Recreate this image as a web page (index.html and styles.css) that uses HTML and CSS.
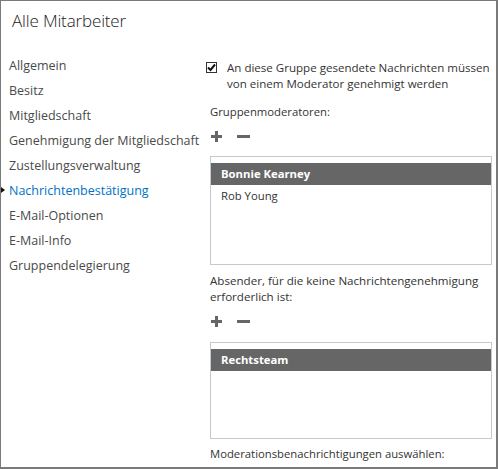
FILE: index.html
```html
<!DOCTYPE html>
<html lang="de">
<head>
<meta charset="utf-8">
<title>Alle Mitarbeiter</title>
<link rel="stylesheet" href="styles.css">
</head>
<body>
<div class="dialog">
  <h1 class="title">Alle Mitarbeiter</h1>
  <div class="main">
    <nav class="nav">
      <div class="nav-item">Allgemein</div>
      <div class="nav-item">Besitz</div>
      <div class="nav-item">Mitgliedschaft</div>
      <div class="nav-item">Genehmigung der Mitgliedschaft</div>
      <div class="nav-item">Zustellungsverwaltung</div>
      <div class="nav-item active">Nachrichtenbestätigung</div>
      <div class="nav-item">E-Mail-Optionen</div>
      <div class="nav-item">E-Mail-Info</div>
      <div class="nav-item">Gruppendelegierung</div>
    </nav>
    <section class="content">
      <label class="check-row">
        <span class="checkbox">
          <svg width="11" height="11" viewBox="0 0 11 11"><path d="M2 5.5 L4.5 8 L9 2.5" fill="none" stroke="#111" stroke-width="2"/></svg>
        </span>
        <span class="check-label">An diese Gruppe gesendete Nachrichten müssen von einem Moderator genehmigt werden</span>
      </label>
      <div class="field-label mod-label">Gruppenmoderatoren:</div>
      <div class="tools">
        <span class="tool plus"></span>
        <span class="tool minus"></span>
      </div>
      <div class="listbox">
        <div class="row selected">Bonnie Kearney</div>
        <div class="row">Rob Young</div>
      </div>
      <div class="field-label sender-label">Absender, für die keine Nachrichtengenehmigung erforderlich ist:</div>
      <div class="tools">
        <span class="tool plus"></span>
        <span class="tool minus"></span>
      </div>
      <div class="listbox small">
        <div class="row selected">Rechtsteam</div>
      </div>
      <div class="field-label notify-label">Moderationsbenachrichtigungen auswählen:</div>
    </section>
  </div>
</div>
</body>
</html>
```
FILE: styles.css
```css
* { box-sizing: border-box; }
html, body { margin: 0; padding: 0; background: #fff; }
body { font-family: "Open Sans", "Noto Sans", sans-serif; color: #333; }
.dialog {
  width: 498px;
  height: 469px;
  border-style: solid;
  border-color: #7a7a7a;
  border-width: 1px 2px 2px 1px;
  overflow: hidden;
}
.title {
  margin: 0;
  padding: 8px 0 0 11px;
  height: 52px;
  font-size: 17px;
  font-weight: 300;
  color: #222;
  line-height: 24px;
  letter-spacing: -0.15px;
}
.main { display: flex; }
.nav { width: 200px; flex: none; }
.nav-item {
  position: relative;
  height: 25px;
  line-height: 25px;
  padding-left: 8px;
  font-size: 12.5px;
  color: #4a4a4a;
  white-space: nowrap;
}
.nav-item.active { color: #0072c6; }
.nav-item.active::before {
  content: "";
  position: absolute;
  left: 0;
  top: 9px;
  border-style: solid;
  border-width: 3.5px 0 3.5px 4px;
  border-color: transparent transparent transparent #111;
}
.content { flex: 1; padding-top: 7px; padding-right: 5px; }
.check-row { display: flex; align-items: flex-start; }
.checkbox {
  width: 11px; height: 11px;
  border: 1px solid #333;
  margin: 2px 10px 0 5px;
  flex: none;
  display: flex;
}
.checkbox svg { display: block; margin: -1px; }
.check-label { font-size: 11.55px; line-height: 16px; color: #333; width: 268px; }
.field-label { font-size: 11.3px; line-height: 16px; color: #333; padding-left: 9px; }
.mod-label { margin-top: 12px; }
.tools { display: flex; align-items: center; height: 20px; padding-left: 10px; margin-top: 6px; gap: 15px; }
.tool { position: relative; width: 13px; height: 11px; }
.tool.plus::before, .tool.plus::after, .tool.minus::before {
  content: ""; position: absolute; background: #666;
}
.tool.plus { width: 11px; }
.tool.plus::before { left: 0; right: 0; top: 4px; height: 3px; }
.tool.plus::after { top: 0; bottom: 0; left: 4px; width: 3px; }
.tool.minus::before { left: 0; right: 0; top: 4px; height: 3px; }
.listbox {
  margin: 10px 0 0 9px;
  width: 282px;
  height: 109px;
  border: 1px solid #c6cacd;
  padding-top: 6px;
}
.listbox.small { height: 97px; margin-top: 11px; }
.row { height: 22px; line-height: 22px; padding-left: 10px; font-size: 11.3px; color: #333; }
.row.selected { background: #666; color: #fff; font-weight: 700; }
.sender-label { margin-top: 8px; width: 290px; font-size: 11.6px; }
.notify-label { margin-top: 7px; }
```
